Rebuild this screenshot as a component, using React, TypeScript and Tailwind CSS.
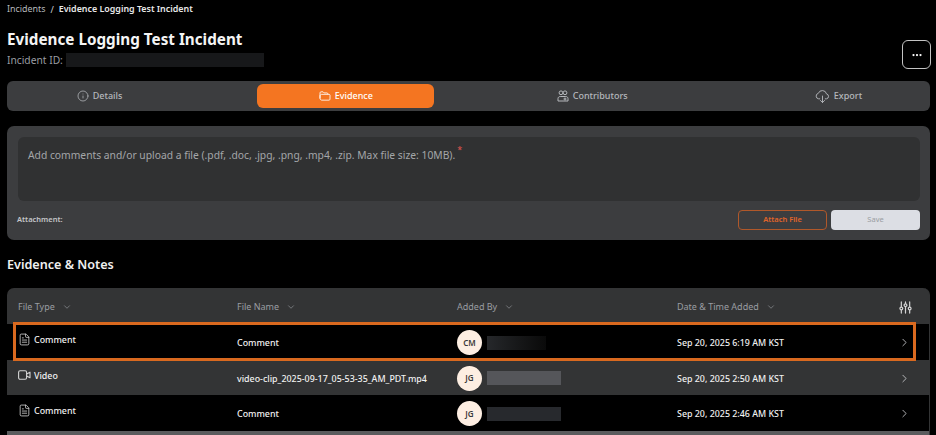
import { ChevronDown, ChevronRight, Ellipsis, FileText, Info } from "lucide-react";
import type { ReactNode } from "react";

const FolderIcon = () => (
  <svg viewBox="0 0 14 12" className="w-[12px] h-[10px]" fill="none" stroke="currentColor" strokeWidth="1" strokeLinejoin="round">
    <path d="M1 9V2.2C1 1.5 1.5 1 2.2 1h2.5l1.2 1.3h3.4c.6 0 1.1.4 1.1 1V4" />
    <path d="M3 4h8.8c.7 0 1.2.5 1.2 1.2v4.6c0 .7-.5 1.2-1.2 1.2H3.2C2 11 1 10 1 8.8V6c0-1.100.9-2 2-2z" />
  </svg>
);

const ContributorsIcon = () => (
  <svg viewBox="0 0 12 12" className="w-[12px] h-[12px]" fill="none" stroke="currentColor" strokeWidth="1">
    <circle cx="4" cy="2.8" r="1.9" />
    <circle cx="8" cy="2.8" r="1.9" />
    <path d="M1 11V8.600C1 7.300 2 6.500 3.200 6.500h5.600C10 6.500 11 7.300 11 8.600V11z" />
    <circle cx="8" cy="9" r="1" />
  </svg>
);

const ExportIcon = () => (
  <svg viewBox="0 0 16 14" className="w-[15px] h-[13px]" fill="none" stroke="currentColor" strokeWidth="1" strokeLinecap="round" strokeLinejoin="round">
    <path d="M5 9.500H3.800A3 3 0 0 1 3.500 3.600 4.600 4.600 0 0 1 12.300 4.200 2.700 2.700 0 0 1 12.300 9.500H11" />
    <path d="M8 6.500v7M5.800 11.300 8 13.500l2.200-2.200" />
  </svg>
);

const VideoIcon = () => (
  <svg viewBox="0 0 13 10" className="w-[13px] h-[10px]" fill="none" stroke="#d4d4d4" strokeWidth="1.100" strokeLinejoin="round">
    <rect x="0.600" y="0.800" width="8" height="8.400" rx="1.500" />
    <path d="M8.600 4 12 2.200v5.600L8.600 6" />
  </svg>
);

const tabs = [
  { label: "Details", icon: <Info className="w-3 h-3" strokeWidth={1.5} /> },
  { label: "Evidence", icon: <FolderIcon />, active: true },
  { label: "Contributors", icon: <ContributorsIcon /> },
  { label: "Export", icon: <ExportIcon /> },
];

const rows = [
  { type: "Comment", name: "Comment", initials: "CM", date: "Sep 20, 2025 6:19 AM KST", dark: true, mask: "w-[59px] bg-gradient-to-r from-[#26282b] to-[#0a0a0a]" },
  { type: "Video", name: "video-clip_2025-09-17_05-53-35_AM_PDT.mp4", initials: "JG", date: "Sep 20, 2025 2:50 AM KST", dark: false, mask: "w-[74px] bg-[#55565a]" },
  { type: "Comment", name: "Comment", initials: "JG", date: "Sep 20, 2025 2:46 AM KST", dark: true, mask: "w-[74px] bg-[#27292d]" },
];

const HeaderCell = ({ children }: { children: ReactNode }) => (
  <div className="flex items-center gap-[7px] text-[9px] text-[#9a9da2]">
    <span>{children}</span>
    <ChevronDown className="w-[10px] h-[10px]" strokeWidth={1.5} />
  </div>
);

export default function App() {
  return (
    <div className="relative w-[936px] h-[435px] overflow-hidden bg-black px-[7px] pt-[3px] text-white font-['Noto_Sans',sans-serif]">
      <div className="flex items-center h-[11px] text-[8.9px] leading-[11px]">
        <span className="text-[#b5b8bc]">Incidents</span>
        <span className="mx-[5px] mt-[2px] text-[#d0d0d0]">/</span>
        <span className="font-semibold text-[#e8e8e8]">Evidence Logging Test Incident</span>
      </div>

      <div className="flex justify-between h-[67px]">
        <div>
          <h1 className="mt-[15px] text-[15.25px] leading-[20px] font-bold text-[#f4f4f4]">Evidence Logging Test Incident</h1>
          <div className="mt-[4px] flex items-center gap-[3px] text-[10.25px] leading-[14px] text-[#9a9da2]">
            <span>Incident ID:</span>
            <span className="w-[198px] h-[14px] bg-[#17181a]" />
          </div>
        </div>
        <button className="mt-[26px] mr-[-2px] w-[29px] h-[29px] rounded-[6px] border border-[#c4c4c4] flex items-center justify-center">
          <Ellipsis className="w-[12px] h-[12px]" strokeWidth={2.5} />
        </button>
      </div>

      <div className="flex items-center justify-between w-[923px] h-[30px] rounded-[6px] bg-[#3c3d3f] pl-[4px] pr-[3px]">
        {tabs.map((tab) => (
          <div
            key={tab.label}
            className={
              tab.active
                ? "flex items-center justify-center gap-[4px] h-[24px] w-[177px] rounded-[6px] bg-[#f47521] text-[9px] font-medium text-white"
                : "flex items-center justify-center gap-[4px] h-[24px] w-[177px] text-[9px] font-medium text-[#b5b8bc]"
            }
          >
            {tab.icon}
            <span>{tab.label}</span>
          </div>
        ))}
      </div>

      <div className="mt-[15px] w-[923px] h-[114px] rounded-[7px] bg-[#3c3d3f] px-[11px] pt-[11px]">
        <div className="h-[64px] w-[902px] rounded-[6px] bg-[#303132] pl-[10px] pt-[10px] text-[10.3px] leading-[16px] text-[#a4a6a9]">
          Add comments and/or upload a file (.pdf, .doc, .jpg, .png, .mp4, .zip. Max file size: 10MB).
          <span className="relative -top-[2px] ml-[2px] align-super text-[9px] leading-none text-[#e0554f]">*</span>
        </div>
        <div className="mt-[9px] flex items-center justify-between w-[902px]">
          <span className="-ml-[1px] text-[7.5px] font-semibold text-[#c4c6c9]">Attachment:</span>
          <div className="flex gap-[4px]">
            <button className="w-[89px] h-[20px] rounded-[4px] border border-[#b0582a] text-[7.5px] font-semibold text-[#e0642a]">Attach File</button>
            <button className="w-[89px] h-[20px] rounded-[4px] bg-[#dcdee4] text-[7.5px] text-[#9a9da2]">Save</button>
          </div>
        </div>
      </div>

      <h2 className="mt-[16px] text-[12.6px] leading-[18px] font-semibold text-[#f0f0f0]">Evidence &amp; Notes</h2>

      <div className="mt-[14px] w-[923px] rounded-t-[7px] overflow-hidden bg-[#333435] border-r border-[#333435]">
        <div className="grid grid-cols-[219px_220px_220px_1fr] items-center h-[36px] pt-[2px] pl-[11px] pr-[17px]">
          <HeaderCell>File Type</HeaderCell>
          <HeaderCell>File Name</HeaderCell>
          <HeaderCell>Added By</HeaderCell>
          <div className="flex items-center justify-between">
            <HeaderCell>Date &amp; Time Added</HeaderCell>
            <svg viewBox="0 0 14 14" className="w-[13px] h-[13px]" fill="none" stroke="#d4d4d4" strokeWidth="1.3" strokeLinecap="round">
              <path d="M2.500 1v5M2.500 10v3M7 1v1.500M7 6.500V13M11.500 1v5M11.500 10v3" />
              <circle cx="2.500" cy="8" r="1.500" />
              <circle cx="7" cy="4.500" r="1.500" />
              <circle cx="11.500" cy="8" r="1.500" />
            </svg>
          </div>
        </div>
        {rows.map((row, i) => (
          <div
            key={i}
            className={`grid grid-cols-[219px_220px_220px_1fr] items-center h-[35.5px] pt-[2px] pl-[11px] pr-[18px] text-[8.9px] font-medium text-[#f0f0f0] ${row.dark ? "bg-black" : "bg-[#333435]"}`}
          >
            <div className="flex items-center gap-[3px] -mt-[6px]">
              {row.type === "Video" ? (
                <VideoIcon />
              ) : (
                <FileText className="w-[13px] h-[13px] text-[#d4d4d4]" strokeWidth={1.5} />
              )}
              <span>{row.type}</span>
            </div>
            <div>{row.name}</div>
            <div className="flex items-center gap-[5px]">
              <span className="w-[25px] h-[25px] rounded-full bg-[#fdeee2] flex items-center justify-center text-[8px] font-semibold text-[#3a3a3a]">{row.initials}</span>
              <span className={`h-[14px] ${row.mask}`} />
            </div>
            <div className="flex items-center justify-between">
              <span>{row.date}</span>
              <ChevronRight className="w-[13px] h-[13px] text-[#d0d2d5]" strokeWidth={1.5} />
            </div>
          </div>
        ))}
        <div className="h-[4px] bg-[#5a5b5d]" />
      </div>

      <div className="absolute left-[13px] top-[322px] w-[903px] h-[39px] border-[3px] border-[#d9691f]" />
    </div>
  );
}
